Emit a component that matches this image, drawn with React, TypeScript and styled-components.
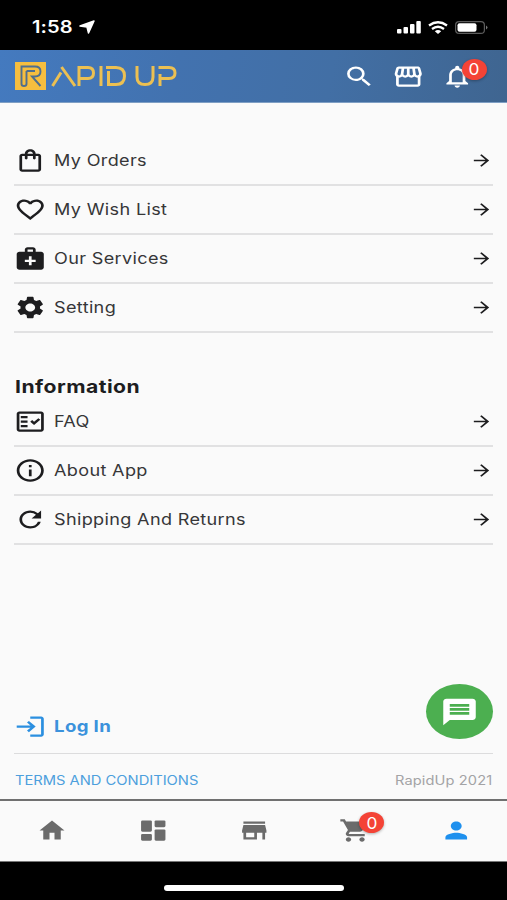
import React from 'react';
import styled, { createGlobalStyle, css } from 'styled-components';
import {
  MdArrowForward, MdFavoriteBorder, MdHome, MdInfoOutline, MdLogin, MdMedicalServices, MdMessage,
  MdNotificationsNone, MdOutlineFactCheck, MdOutlineShoppingBag, MdOutlineStorefront, MdPerson, MdRefresh,
  MdSearch, MdSettings, MdShoppingCart, MdStore,
} from 'react-icons/md';

const Global = createGlobalStyle`
  * { box-sizing: border-box; }
  body { margin: 0; background: #000; font-family: Inter, "Liberation Sans", sans-serif; }
`;

const Screen = styled.div`
  width: 507px; height: 900px; overflow: hidden;
  display: flex; flex-direction: column;
  background: #fafafa; color: #1d1d1f;
`;

const StatusBar = styled.div`
  flex: none; height: 50px; padding: 4px 19px 0 32px;
  display: flex; align-items: center; justify-content: space-between;
  background: #000; color: #fff;
`;
const StatusGroup = styled.div<{ $gap: number }>`
  display: flex; align-items: center; gap: ${p => p.$gap}px;
`;

const Label = styled.span<{ $size: number; $w: number; $weight?: number; $color?: string; $track?: number; $k?: number }>`
  display: block; width: ${p => p.$w}px; white-space: nowrap; line-height: 1.2;
  font-size: ${p => p.$size}px; font-weight: ${p => p.$weight ?? 400};
  color: ${p => p.$color ?? '#363638'}; letter-spacing: ${p => p.$track ?? 0.3}px;
  transform: scaleX(${p => p.$k ?? 1.165}); transform-origin: left center;
`;
const RowLabel = styled(Label)`margin-top: 2px;`;

const iconSize = css<{ $w?: number; $h?: number }>`
  svg { display: block; width: ${p => p.$w ?? 32.5}px; height: ${p => p.$h ?? 27}px; }
`;
const IconBox = styled.span<{ $w?: number; $h?: number }>`
  position: relative; display: block; flex: none; ${iconSize}
`;

const Header = styled.header`
  flex: none; height: 53px; padding: 0 33.5px 0 15px;
  display: flex; align-items: center; justify-content: space-between;
  background: linear-gradient(100deg, #447abf 0%, #4272af 35%, #426fa5 65%, #3f6590 100%);
  border-bottom: 1px solid #7f9fc4; color: #fff;
`;
const Actions = styled.div`display: flex; gap: 16.5px;`;

const Badge = styled.span<{ $x: number; $y: number }>`
  position: absolute; left: ${p => p.$x}px; top: ${p => p.$y}px;
  width: 25px; height: 21px; border-radius: 50%;
  display: flex; align-items: center; justify-content: center;
  background: #f44336; color: #fff; box-shadow: 0 1px 3px rgba(0,0,0,.3);
  font-size: 16px; line-height: 1;
  span { transform: scaleX(1.08); }
`;

const Main = styled.main`
  flex: 1; min-height: 0; padding: 34px 14px 0 14px;
  display: flex; flex-direction: column;
`;
const Row = styled.div`
  flex: none; height: 49px; padding-bottom: 1px;
  display: flex; align-items: center; gap: 7.5px;
  border-bottom: 2px solid #e1e1e2;
`;
const Spacer = styled.span`flex: 1;`;
const Heading = styled.h2`margin: 43px 0 0; height: 22px; padding-left: 1px; font-size: inherit;`;
const Bottom = styled.div`margin-top: auto; display: flex; flex-direction: column;`;
const LoginArea = styled.div`
  height: 71px;
  display: flex; align-items: flex-start; justify-content: space-between;
  border-bottom: 1px solid #dcdcdd;
`;
const LoginLink = styled.div`display: flex; align-items: center; gap: 7.5px; margin-top: 30px;`;
const Chat = styled.div`
  width: 67px; height: 55px; border-radius: 50%; margin-top: 1px;
  display: flex; align-items: center; justify-content: center;
  background: #4caf50; color: #fff;
`;
const Footer = styled.footer`
  height: 45px; padding: 8px 0 0 1px;
  display: flex; align-items: center; justify-content: space-between;
`;

const Nav = styled.nav`
  flex: none; height: 63px; padding: 0 0 2px 1px;
  display: grid; grid-template-columns: repeat(5, 1fr); place-items: center;
  border-top: 2px solid #707070; border-bottom: 1px solid #777;
  background: #fafafa; color: #6b6b6b;
`;
const NavItem = styled(IconBox)<{ $active?: boolean }>`color: ${p => (p.$active ? '#1e90ee' : 'inherit')};`;
const HomeArea = styled.div`
  flex: none; height: 38px; padding: 23px 0 0 1px; display: flex; justify-content: center; background: #000;
`;
const HomeBar = styled.div`width: 180px; height: 6px; border-radius: 3px; background: #fff;`;

const fit = { preserveAspectRatio: 'none' } as const;

const Logo = () => (
  <svg width="163" height="30" viewBox="0 0 163 30" fill="none" aria-label="Rapid Up">
    <rect x="0" y="1" width="31" height="28" fill="#f6be3f" />
    <path d="M11.500 10V23Q11.500 25 9 25T6.500 23V5.500H20Q25.500 5.500 25.500 10.500T20 15.500H17L25.500 25M11.500 10H20" stroke="#4f6f8f" strokeWidth="1.900" />
    <g stroke="#ecc052" strokeWidth="3">
      <path d="M37.500 25 46 11.500M46.500 6 60 25" />
      <path d="M64 25V6.500H73Q78.500 6.500 78.500 12T73 17.500H64" />
      <path d="M86 5V25" />
      <path d="M93.500 10V23.500H101Q109.500 23.500 109.500 15T101 6.500H91" />
      <path d="M122 5V16Q122 23.500 130 23.500T138 16V5" />
      <path d="M145 25V13M143.500 6.500H154Q160 6.500 160 12T154 17.500H146" />
    </g>
  </svg>
);

const DashboardIcon = () => (
  <svg viewBox="0 0 24 24" fill="currentColor" preserveAspectRatio="none">
    <rect x="3" y="3" width="8" height="10" rx="1" /><rect x="3" y="15" width="8" height="6" rx="1" />
    <rect x="13" y="3" width="8" height="6" rx="1" /><rect x="13" y="11" width="8" height="10" rx="1" />
  </svg>
);

const accountRows = [
  { text: 'My Orders', w: 92, Icon: MdOutlineShoppingBag },
  { text: 'My Wish List', w: 113, Icon: MdFavoriteBorder },
  { text: 'Our Services', w: 114, Icon: MdMedicalServices },
  { text: 'Setting', w: 63, Icon: MdSettings },
];
const infoRows = [
  { text: 'FAQ', w: 36, Icon: MdOutlineFactCheck },
  { text: 'About App', w: 94, Icon: MdInfoOutline },
  { text: 'Shipping And Returns', w: 193, Icon: MdRefresh },
];

const MenuRow = ({ text, w, Icon }: (typeof accountRows)[number]) => (
  <Row>
    <IconBox><Icon {...fit} /></IconBox>
    <RowLabel $size={15.5} $w={w}>{text}</RowLabel>
    <Spacer />
    <IconBox $w={23} $h={19}><MdArrowForward {...fit} /></IconBox>
  </Row>
);

export default function App() {
  return (
    <>
      <Global />
      <Screen>
        <StatusBar>
          <StatusGroup $gap={5}>
            <Label $size={17} $w={42} $weight={600} $color="#fff" $track={0.1} $k={1.18}>1:58</Label>
            <svg width="16" height="14" viewBox="0 0 16 14"><path d="M15 1 9.500 13 8 7 1 6Z" fill="#fff" stroke="#fff" strokeWidth="1.500" strokeLinejoin="round" /></svg>
          </StatusGroup>
          <StatusGroup $gap={7}>
            <svg width="24" height="13" viewBox="0 0 24 13" fill="#fff">
              <rect x="0" y="8" width="4.500" height="4.500" rx="1" /><rect x="6.500" y="6" width="4.500" height="6.500" rx="1" />
              <rect x="13" y="3" width="4.500" height="9.500" rx="1" /><rect x="19.300" y="0" width="4.500" height="12.500" rx="1" />
            </svg>
            <svg width="20" height="13" viewBox="0 0 20 13" fill="none" stroke="#fff" strokeWidth="2.300">
              <path d="M1 4.500Q10-2 19 4.500M4 8Q10 3.500 16 8" /><path d="M6.800 10.200Q10 8 13.200 10.200L10 13Z" fill="#fff" stroke="none" />
            </svg>
            <svg width="33" height="13" viewBox="0 0 33 13">
              <rect x=".6" y=".6" width="28.800" height="11.800" rx="3.500" fill="none" stroke="#5c5c5c" strokeWidth="1.200" />
              <rect x="2.500" y="2.300" width="19" height="8.400" rx="2" fill="#fff" /><path d="M31 4.500Q34 6.500 31 8.500Z" fill="#777" />
            </svg>
          </StatusGroup>
        </StatusBar>
        <Header>
          <Logo />
          <Actions>
            <IconBox><MdSearch {...fit} /></IconBox>
            <IconBox><MdOutlineStorefront {...fit} /></IconBox>
            <IconBox><MdNotificationsNone {...fit} /><Badge $x={21} $y={-4}><span>0</span></Badge></IconBox>
          </Actions>
        </Header>
        <Main>
          {accountRows.map(r => <MenuRow key={r.text} {...r} />)}
          <Heading><Label $size={18} $w={125} $weight={700} $color="#1d1d1f" $k={1.175} $track={0.4}>Information</Label></Heading>
          {infoRows.map(r => <MenuRow key={r.text} {...r} />)}
          <Bottom>
            <LoginArea>
              <LoginLink>
                <IconBox><MdLogin color="#2b8fe0" {...fit} /></IconBox>
                <Label $size={16} $w={57} $weight={700} $color="#3b92dc">Log In</Label>
              </LoginLink>
              <Chat><IconBox $w={39} $h={32}><MdMessage {...fit} /></IconBox></Chat>
            </LoginArea>
            <Footer>
              <Label $size={12.6} $w={183} $color="#4d9fdd" $track={-0.02} $k={1.17}>TERMS AND CONDITIONS</Label>
              <Label $size={12.6} $w={98.5} $color="#a3a3a5" $track={0.1} $k={1.16}>RapidUp 2021</Label>
            </Footer>
          </Bottom>
        </Main>
        <Nav>
          <NavItem $w={30}><MdHome {...fit} /></NavItem>
          <NavItem><DashboardIcon /></NavItem>
          <NavItem><MdStore {...fit} /></NavItem>
          <NavItem><MdShoppingCart {...fit} /><Badge $x={20.5} $y={-4.5}><span>0</span></Badge></NavItem>
          <NavItem $active><MdPerson {...fit} /></NavItem>
        </Nav>
        <HomeArea><HomeBar /></HomeArea>
      </Screen>
    </>
  );
}
